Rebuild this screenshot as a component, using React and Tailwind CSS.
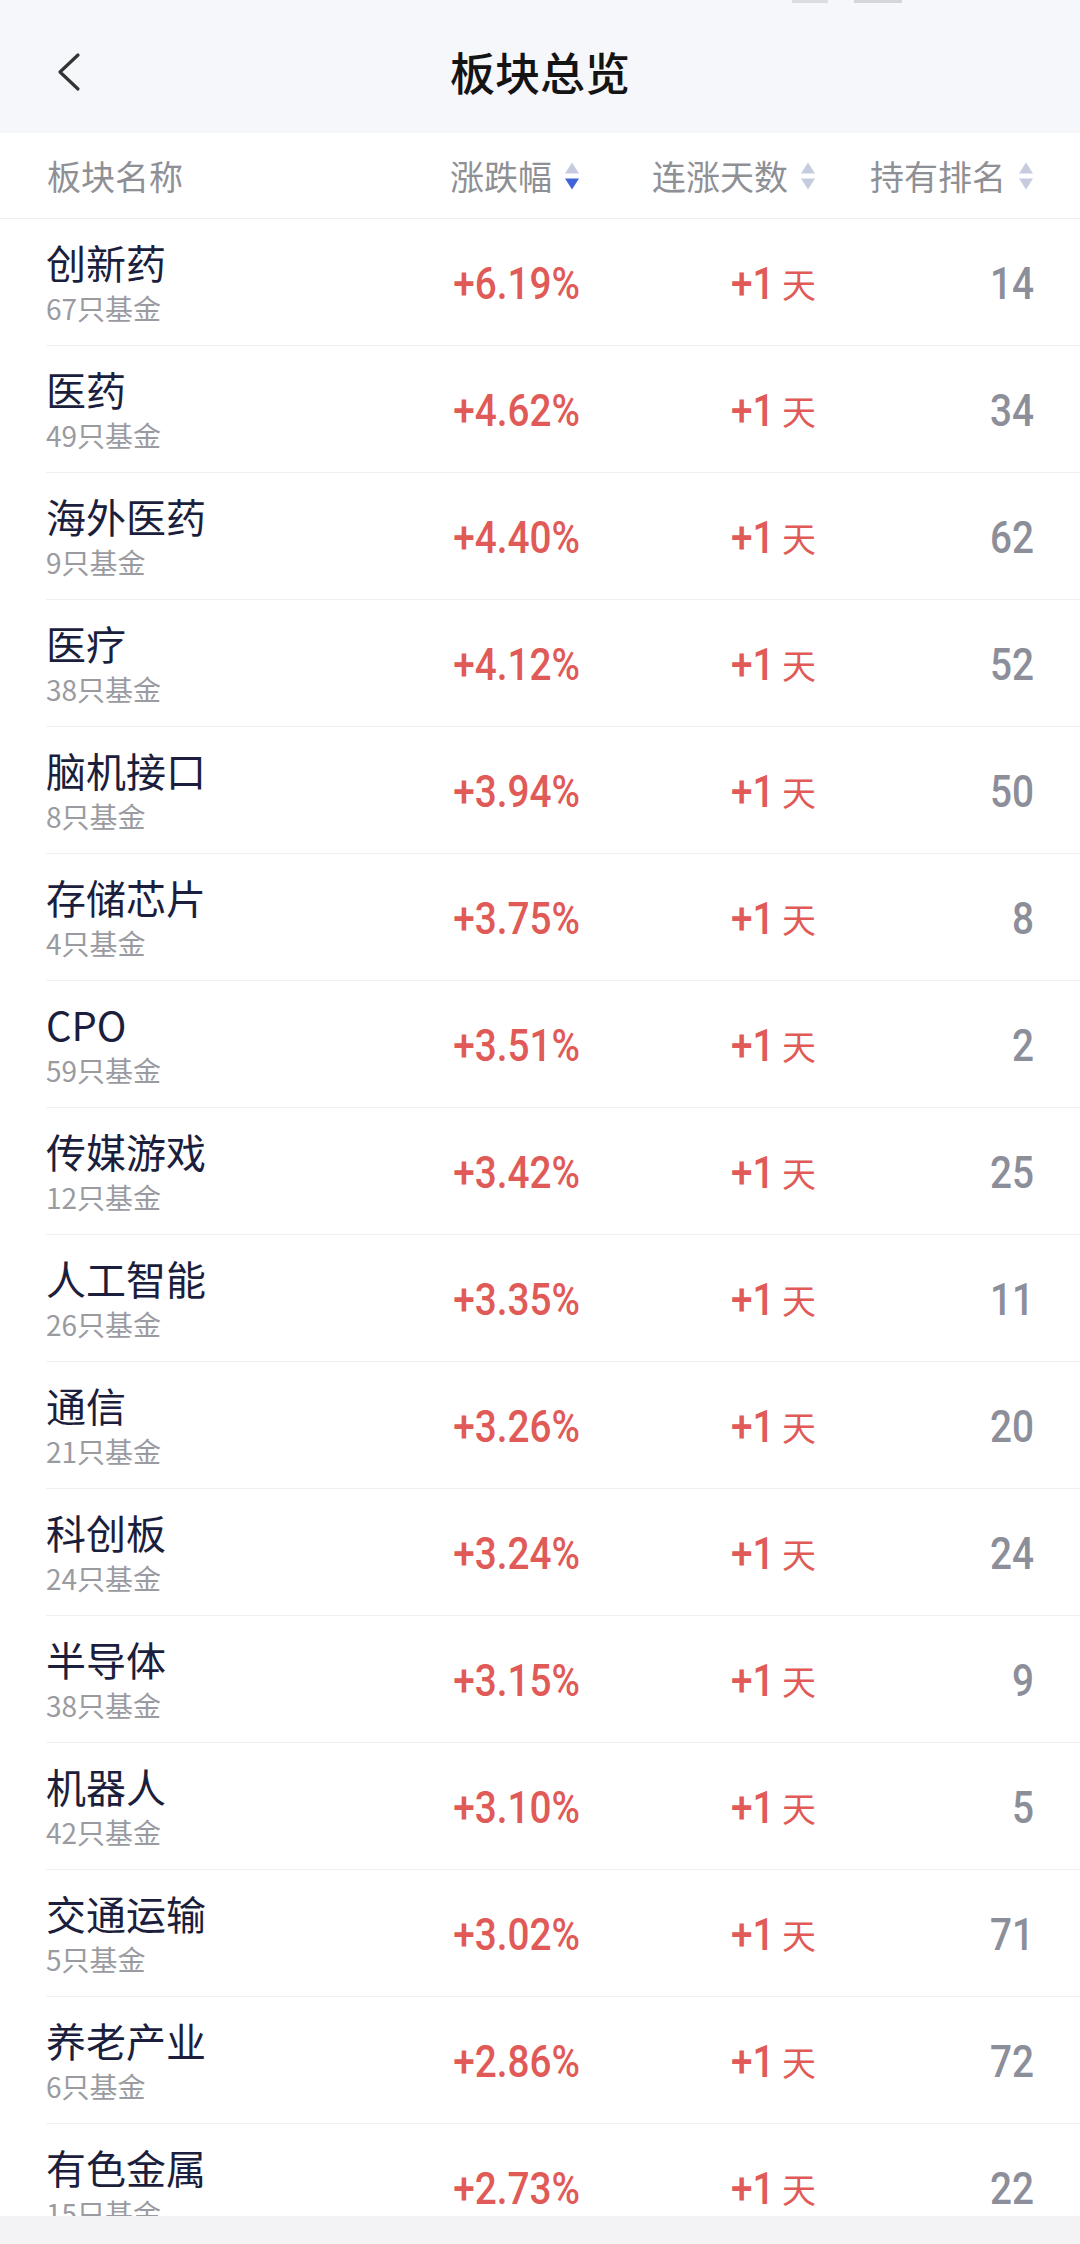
const rows = [
  { name: '创新药', count: 67, pct: '+6.19%', rank: 14 },
  { name: '医药', count: 49, pct: '+4.62%', rank: 34 },
  { name: '海外医药', count: 9, pct: '+4.40%', rank: 62 },
  { name: '医疗', count: 38, pct: '+4.12%', rank: 52 },
  { name: '脑机接口', count: 8, pct: '+3.94%', rank: 50 },
  { name: '存储芯片', count: 4, pct: '+3.75%', rank: 8 },
  { name: 'CPO', count: 59, pct: '+3.51%', rank: 2 },
  { name: '传媒游戏', count: 12, pct: '+3.42%', rank: 25 },
  { name: '人工智能', count: 26, pct: '+3.35%', rank: 11 },
  { name: '通信', count: 21, pct: '+3.26%', rank: 20 },
  { name: '科创板', count: 24, pct: '+3.24%', rank: 24 },
  { name: '半导体', count: 38, pct: '+3.15%', rank: 9 },
  { name: '机器人', count: 42, pct: '+3.10%', rank: 5 },
  { name: '交通运输', count: 5, pct: '+3.02%', rank: 71 },
  { name: '养老产业', count: 6, pct: '+2.86%', rank: 72 },
  { name: '有色金属', count: 15, pct: '+2.73%', rank: 22 },
];

const cjk = "font-['Noto_Sans_CJK_SC','Noto_Sans',sans-serif]";
const num = "font-['Roboto','Liberation_Sans',sans-serif]";

function SortIcon({ active }) {
  return (
    <svg width="16" height="30" viewBox="0 0 16 30" className="ml-[12px] shrink-0">
      <path d="M8 1.5 L15 12.5 L1 12.5 Z" fill="#c7cbe0" />
      <path d="M1 17.5 L15 17.5 L8 28.5 Z" fill={active ? '#4163d7' : '#c7cbe0'} />
    </svg>
  );
}

function Cond({ children, className = '' }) {
  return <span className={`inline-block origin-right scale-x-[0.88] ${num} ${className}`}>{children}</span>;
}

export default function App() {
  return (
    <div className="w-[1080px] h-[2244px] flex flex-col overflow-hidden bg-white">
      {/* top bar */}
      <div className="h-[133px] shrink-0 bg-[#f6f7fa] relative">
        <div className="absolute top-0 left-[792px] flex gap-[6px]">
          <div className="w-[36px] h-[3px] bg-[#dcdde2]" />
          <div className="ml-[20px] w-[48px] h-[3px] bg-[#d5d6dc]" />
        </div>
        <div className="h-full pt-[10px] flex items-center">
          <div className="w-[200px] pl-[56px] flex items-center">
            <svg width="26" height="40" viewBox="0 0 26 40" fill="none">
              <path d="M22 3 L4 20 L22 37" stroke="#333333" strokeWidth="3.2" strokeLinecap="round" strokeLinejoin="round" />
            </svg>
          </div>
          <div className={`flex-1 text-center text-[45px] leading-none font-medium text-[#141414] ${cjk}`}>板块总览</div>
          <div className="w-[200px]" />
        </div>
      </div>

      {/* column header */}
      <div className={`h-[86px] shrink-0 border-b border-[#efeff2] flex items-center pl-[47px] pr-[46px] text-[34px] leading-none text-[#8f9095] ${cjk}`}>
        <div className="flex-1">板块名称</div>
        <div className="w-[250px] flex items-center justify-end">
          <span>涨跌幅</span>
          <SortIcon active />
        </div>
        <div className="w-[236px] flex items-center justify-end">
          <span>连涨天数</span>
          <SortIcon />
        </div>
        <div className="w-[218px] flex items-center justify-end">
          <span>持有排名</span>
          <SortIcon />
        </div>
      </div>

      {/* list */}
      <div className="flex-1 min-h-0 overflow-hidden">
        {rows.map((r) => (
          <div key={r.name} className="h-[127px] ml-[46px] pr-[46px] border-b border-[#f0f0f3] flex items-center">
            <div className={`flex-1 flex flex-col ${cjk}`}>
              <span className="text-[40px] leading-[46px] text-[#1b1e3c]">{r.name}</span>
              <span className="mt-[6px] text-[28px] leading-[34px] text-[#9a9ba1]">{r.count}只基金</span>
            </div>
            <div className="w-[250px] pt-[4px] text-right">
              <Cond className="text-[44px] leading-none font-medium text-[#e05a57]">{r.pct}</Cond>
            </div>
            <div className="w-[236px] pt-[4px] flex items-center justify-end text-[#e05a57]">
              <Cond className="text-[44px] leading-none font-medium">+1</Cond>
              <span className={`ml-[8px] text-[34px] leading-none ${cjk}`}>天</span>
            </div>
            <div className="w-[218px] pt-[4px] text-right">
              <Cond className="text-[44px] leading-none font-medium text-[#8c8e99]">{r.rank}</Cond>
            </div>
          </div>
        ))}
      </div>

      {/* bottom bar */}
      <div className="h-[28px] shrink-0 bg-[#f3f3f5]" />
    </div>
  );
}
